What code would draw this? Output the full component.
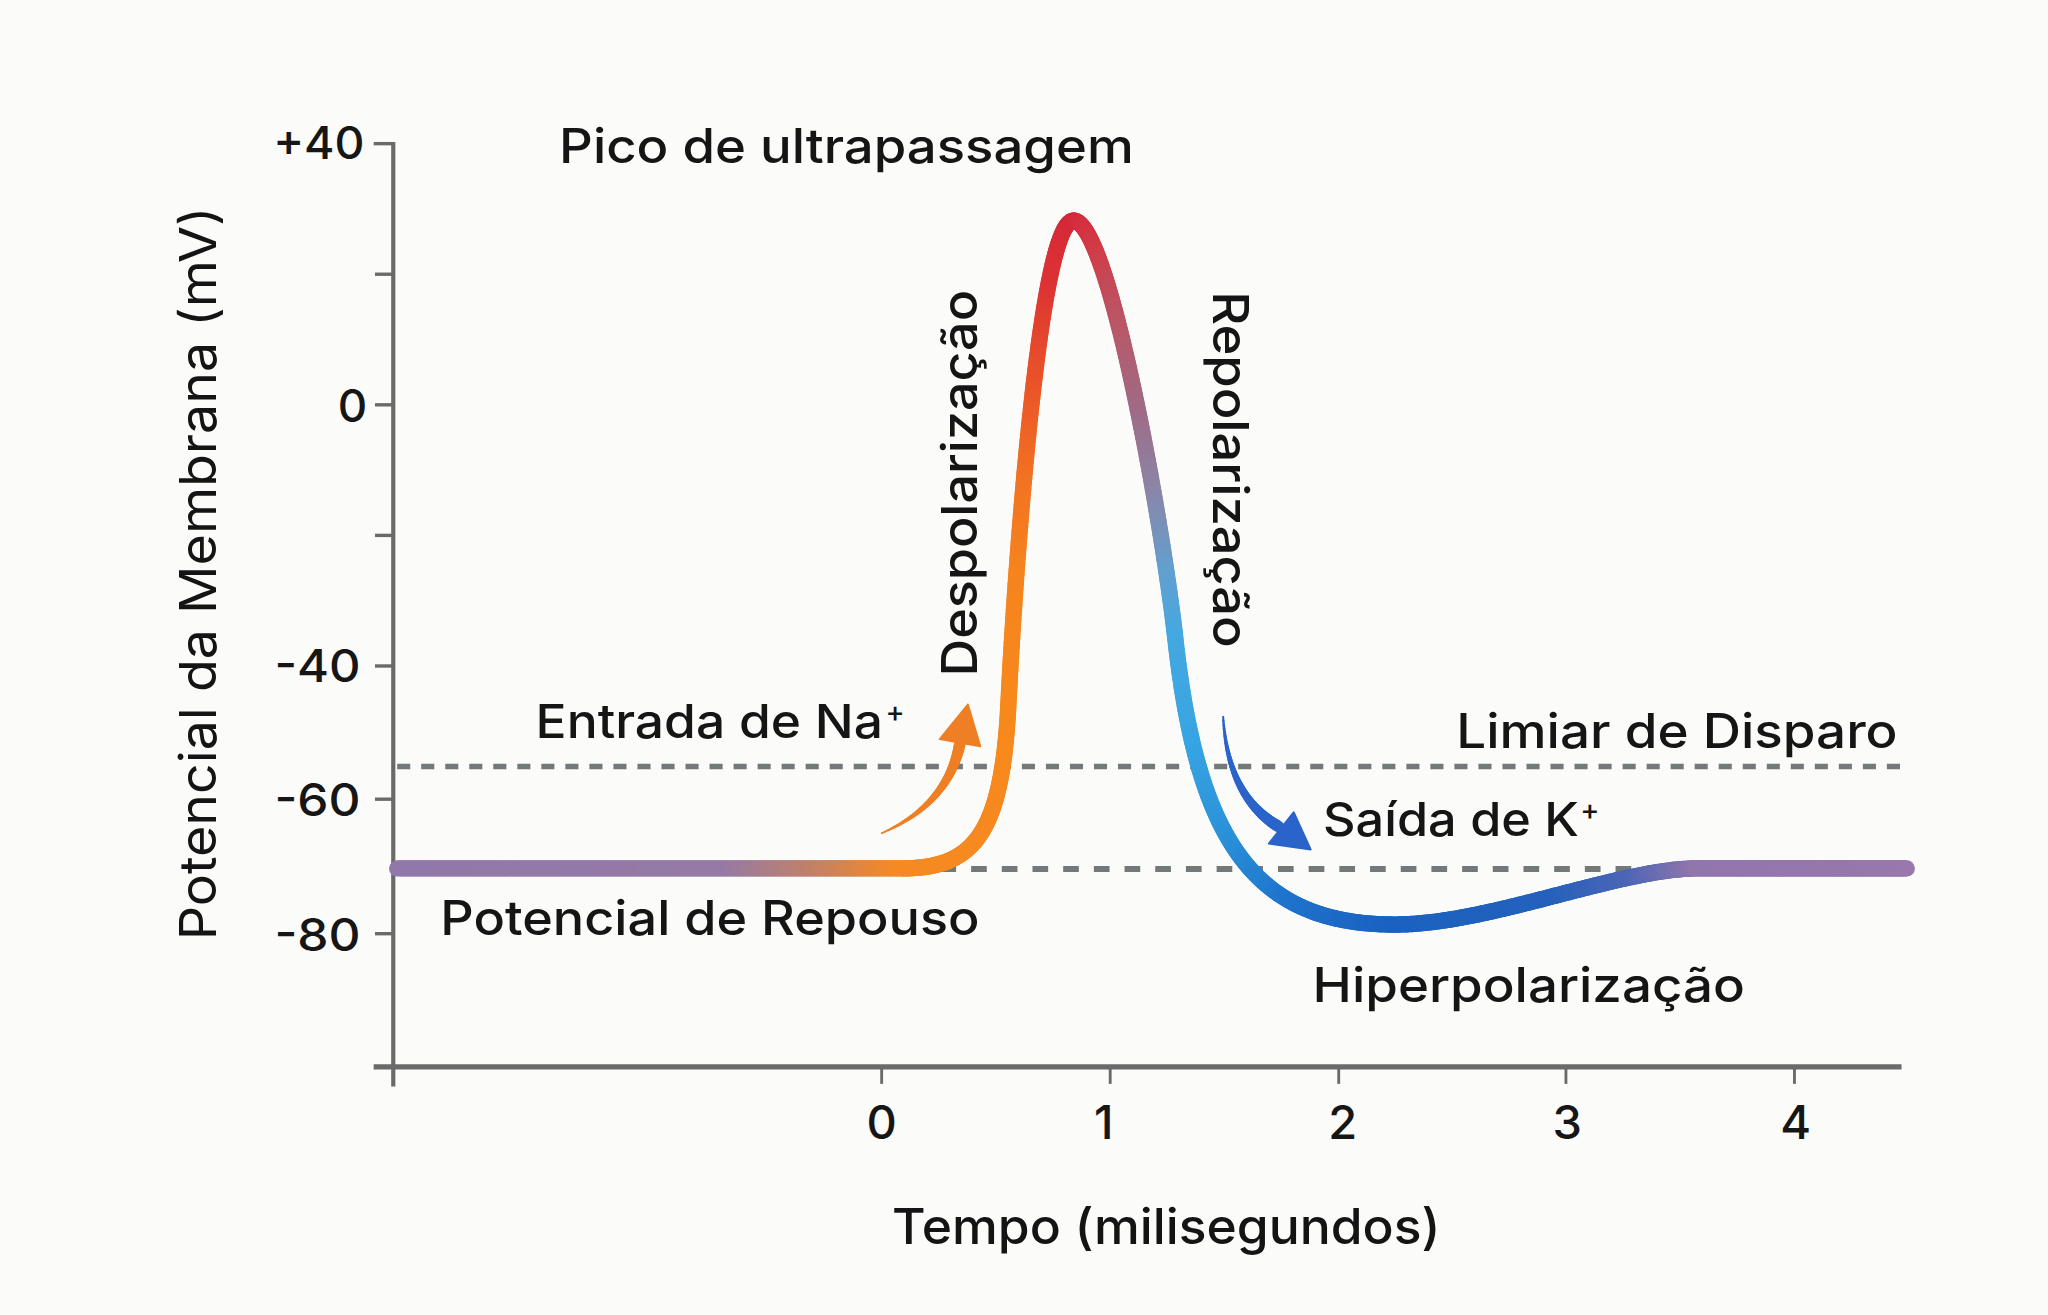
import React from "react";

type Pt = [number, number];
type Stop = [number, string];
type Seg = { p: Pt[]; stops: Stop[] };

const segments: Seg[] = [
  {
    p: [[304, 665], [430, 665], [560, 665], [690, 665]],
    stops: [[0, "#9178ab"], [0.66, "#957aa6"], [0.86, "#c8825f"], [1, "#f58a24"]],
  },
  {
    p: [[690, 665], [745, 665], [767, 640], [772, 540]],
    stops: [[0, "#f58a24"], [1, "#f7891c"]],
  },
  {
    p: [[772, 540], [777.5, 430], [796, 169], [822, 169]],
    stops: [[0, "#f7891c"], [0.25, "#f6841e"], [0.4, "#f27222"], [0.55, "#ea5428"], [0.75, "#dc3234"], [1, "#d4283a"]],
  },
  {
    p: [[822, 169], [849, 169], [890, 400], [900, 490]],
    stops: [[0, "#d4283a"], [0.2, "#d23a46"], [0.4, "#b85868"], [0.55, "#a06a84"], [0.7, "#8a86a8"], [0.85, "#62a0cf"], [1, "#45a8e0"]],
  },
  {
    p: [[900, 490], [917, 643], [960, 708], [1068, 708]],
    stops: [[0, "#45a8e0"], [0.2, "#37a5e2"], [0.45, "#2a90d8"], [0.7, "#1f74cc"], [1, "#1a62c0"]],
  },
  {
    p: [[1068, 708], [1140, 708], [1240, 665], [1300, 665]],
    stops: [[0, "#1a62c0"], [0.5, "#2461bc"], [0.75, "#4c65b6"], [1, "#9176ad"]],
  },
  {
    p: [[1300, 665], [1360, 665], [1410, 665], [1460, 665]],
    stops: [[0, "#9176ad"], [1, "#9878ad"]],
  },
];

function hex(h: string): [number, number, number] {
  const v = parseInt(h.slice(1), 16);
  return [(v >> 16) & 255, (v >> 8) & 255, v & 255];
}

function colorAt(stops: Stop[], t: number): string {
  let i = 0;
  while (i < stops.length - 2 && t > stops[i + 1][0]) i++;
  const [t0, c0] = stops[i];
  const [t1, c1] = stops[Math.min(i + 1, stops.length - 1)];
  const k = t1 === t0 ? 0 : Math.min(1, Math.max(0, (t - t0) / (t1 - t0)));
  const a = hex(c0);
  const b = hex(c1);
  return `rgb(${Math.round(a[0] + (b[0] - a[0]) * k)},${Math.round(a[1] + (b[1] - a[1]) * k)},${Math.round(
    a[2] + (b[2] - a[2]) * k
  )})`;
}

function bez(p: Pt[], t: number): Pt {
  const u = 1 - t;
  return [
    u * u * u * p[0][0] + 3 * u * u * t * p[1][0] + 3 * u * t * t * p[2][0] + t * t * t * p[3][0],
    u * u * u * p[0][1] + 3 * u * u * t * p[1][1] + 3 * u * t * t * p[2][1] + t * t * t * p[3][1],
  ];
}

function buildCurve() {
  const out: { x1: number; y1: number; x2: number; y2: number; c: string }[] = [];
  for (const s of segments) {
    const steps = 120;
    for (let i = 0; i < steps; i++) {
      const t0 = i / steps;
      const t1 = (i + 1) / steps;
      const a = bez(s.p, t0);
      const b = bez(s.p, t1);
      out.push({ x1: a[0], y1: a[1], x2: b[0], y2: b[1], c: colorAt(s.stops, (t0 + t1) / 2) });
    }
  }
  return out;
}

function taper(a: Pt, c: Pt, b: Pt, w0: number, w1: number, color: string) {
  const out: { x1: number; y1: number; x2: number; y2: number; w: number; c: string }[] = [];
  const steps = 40;
  const q = (t: number): Pt => [
    (1 - t) * (1 - t) * a[0] + 2 * (1 - t) * t * c[0] + t * t * b[0],
    (1 - t) * (1 - t) * a[1] + 2 * (1 - t) * t * c[1] + t * t * b[1],
  ];
  for (let s = 0; s < steps; s++) {
    const t0 = s / steps;
    const t1 = (s + 1) / steps;
    const p = q(t0);
    const r = q(t1);
    out.push({ x1: p[0], y1: p[1], x2: r[0], y2: r[1], w: w0 + (w1 - w0) * ((t0 + t1) / 2), c: color });
  }
  return out;
}

const mainSegs = buildCurve();
const naShaft = taper([675, 638], [726, 616], [735, 569], 1.2, 9, "#ef7f24");
const kShaft = taper([936.5, 549], [940, 610], [979, 633], 1.5, 9, "#2a63c9");

const FONT = "Inter, 'Liberation Sans', sans-serif";

export default function App() {
  return (
    <div className="w-[2048px] h-[1315px] bg-[#fbfbf9] overflow-hidden">
      <svg viewBox="0 0 1568 1007" className="block w-full h-full" fontFamily={FONT}>
        {/* dashed threshold lines */}
        <line x1={304} y1={587} x2={1456} y2={587} stroke="#737878" strokeWidth={4.2} strokeDasharray="10 8.4" />
        <line x1={720} y1={665.5} x2={1292} y2={665.5} stroke="#737878" strokeWidth={4.6} strokeDasharray="12 11.5" />

        {/* axes */}
        <g stroke="#6a6a6a" strokeLinecap="butt">
          <line x1={301} y1={109} x2={301} y2={832} strokeWidth={3.2} />
          <line x1={286} y1={817} x2={1456} y2={817} strokeWidth={4} />
          <line x1={286} y1={110} x2={302} y2={110} strokeWidth={2.6} />
          <line x1={287} y1={210} x2={301} y2={210} strokeWidth={2.6} />
          <line x1={287} y1={310} x2={301} y2={310} strokeWidth={2.6} />
          <line x1={287} y1={410} x2={301} y2={410} strokeWidth={2.6} />
          <line x1={287} y1={510} x2={301} y2={510} strokeWidth={2.6} />
          <line x1={287} y1={612} x2={301} y2={612} strokeWidth={2.6} />
          <line x1={287} y1={715} x2={301} y2={715} strokeWidth={2.6} />
          <line x1={675} y1={817} x2={675} y2={830} strokeWidth={2.2} />
          <line x1={850} y1={817} x2={850} y2={830} strokeWidth={2.2} />
          <line x1={1025} y1={817} x2={1025} y2={830} strokeWidth={2.2} />
          <line x1={1199} y1={817} x2={1199} y2={830} strokeWidth={2.2} />
          <line x1={1374} y1={817} x2={1374} y2={830} strokeWidth={2.2} />
        </g>

        {/* action potential curve */}
        <g strokeLinecap="round" strokeWidth={12.5}>
          {mainSegs.map((s, i) => (
            <line key={i} x1={s.x1} y1={s.y1} x2={s.x2} y2={s.y2} stroke={s.c} />
          ))}
        </g>

        {/* Na+ arrow */}
        <g strokeLinecap="round">
          {naShaft.map((s, i) => (
            <line key={i} x1={s.x1} y1={s.y1} x2={s.x2} y2={s.y2} stroke={s.c} strokeWidth={s.w} />
          ))}
        </g>
        <polygon points="719.5,566 750.5,571.5 741,539.5" fill="#ef7f24" stroke="#ef7f24" strokeWidth={1.5} strokeLinejoin="round" />

        {/* K+ arrow */}
        <g strokeLinecap="round">
          {kShaft.map((s, i) => (
            <line key={i} x1={s.x1} y1={s.y1} x2={s.x2} y2={s.y2} stroke={s.c} strokeWidth={s.w} />
          ))}
        </g>
        <polygon points="971.5,646 990.5,622 1003.5,650.5" fill="#2a63c9" stroke="#2a63c9" strokeWidth={1.5} strokeLinejoin="round" />

        {/* y tick labels */}
        <g fill="#161616" fontSize={35} fontWeight={500} textAnchor="end">
          <text x={279} y={122} textLength={70} lengthAdjust="spacingAndGlyphs">+40</text>
          <text x={281} y={323}>0</text>
          <text x={276} y={522} textLength={66} lengthAdjust="spacingAndGlyphs">-40</text>
          <text x={276} y={625} textLength={66} lengthAdjust="spacingAndGlyphs">-60</text>
          <text x={276} y={728} textLength={66} lengthAdjust="spacingAndGlyphs">-80</text>
        </g>

        {/* x tick labels */}
        <g fill="#161616" fontSize={36} fontWeight={500} textAnchor="middle">
          <text x={675} y={872}>0</text>
          <text x={845} y={872}>1</text>
          <text x={1028} y={872}>2</text>
          <text x={1200} y={872}>3</text>
          <text x={1375} y={872}>4</text>
        </g>

        {/* axis titles */}
        <text x={683} y={953} fontSize={38} fontWeight={500} fill="#141414" textLength={420} lengthAdjust="spacingAndGlyphs">
          Tempo (milisegundos)
        </text>
        <text
          x={0}
          y={0}
          fontSize={39}
          fontWeight={400}
          fill="#141414"
          textLength={562}
          lengthAdjust="spacingAndGlyphs"
          transform="translate(165 720) rotate(-90)"
        >
          Potencial da Membrana (mV)
        </text>

        {/* annotations */}
        <g fill="#151515" fontWeight={500}>
          <text x={428} y={125} fontSize={37} textLength={440} lengthAdjust="spacingAndGlyphs">
            Pico de ultrapassagem
          </text>
          <text
            x={0}
            y={0}
            fontSize={38}
            textLength={296}
            lengthAdjust="spacingAndGlyphs"
            transform="translate(748 518) rotate(-90)"
          >
            Despolarização
          </text>
          <text
            x={0}
            y={0}
            fontSize={38}
            textLength={273}
            lengthAdjust="spacingAndGlyphs"
            transform="translate(929 223) rotate(90)"
          >
            Repolarização
          </text>
          <text x={410} y={565} fontSize={36} textLength={266} lengthAdjust="spacingAndGlyphs">
            Entrada de Na
          </text>
          <text x={678} y={553} fontSize={22}>+</text>
          <text x={1115} y={573} fontSize={37} textLength={338} lengthAdjust="spacingAndGlyphs">
            Limiar de Disparo
          </text>
          <text x={1013} y={640} fontSize={36} textLength={196} lengthAdjust="spacingAndGlyphs">
            Saída de K
          </text>
          <text x={1210} y={628} fontSize={22}>+</text>
          <text x={337} y={716} fontSize={37} textLength={413} lengthAdjust="spacingAndGlyphs">
            Potencial de Repouso
          </text>
          <text x={1005} y={767} fontSize={37} textLength={331} lengthAdjust="spacingAndGlyphs">
            Hiperpolarização
          </text>
        </g>
      </svg>
    </div>
  );
}
